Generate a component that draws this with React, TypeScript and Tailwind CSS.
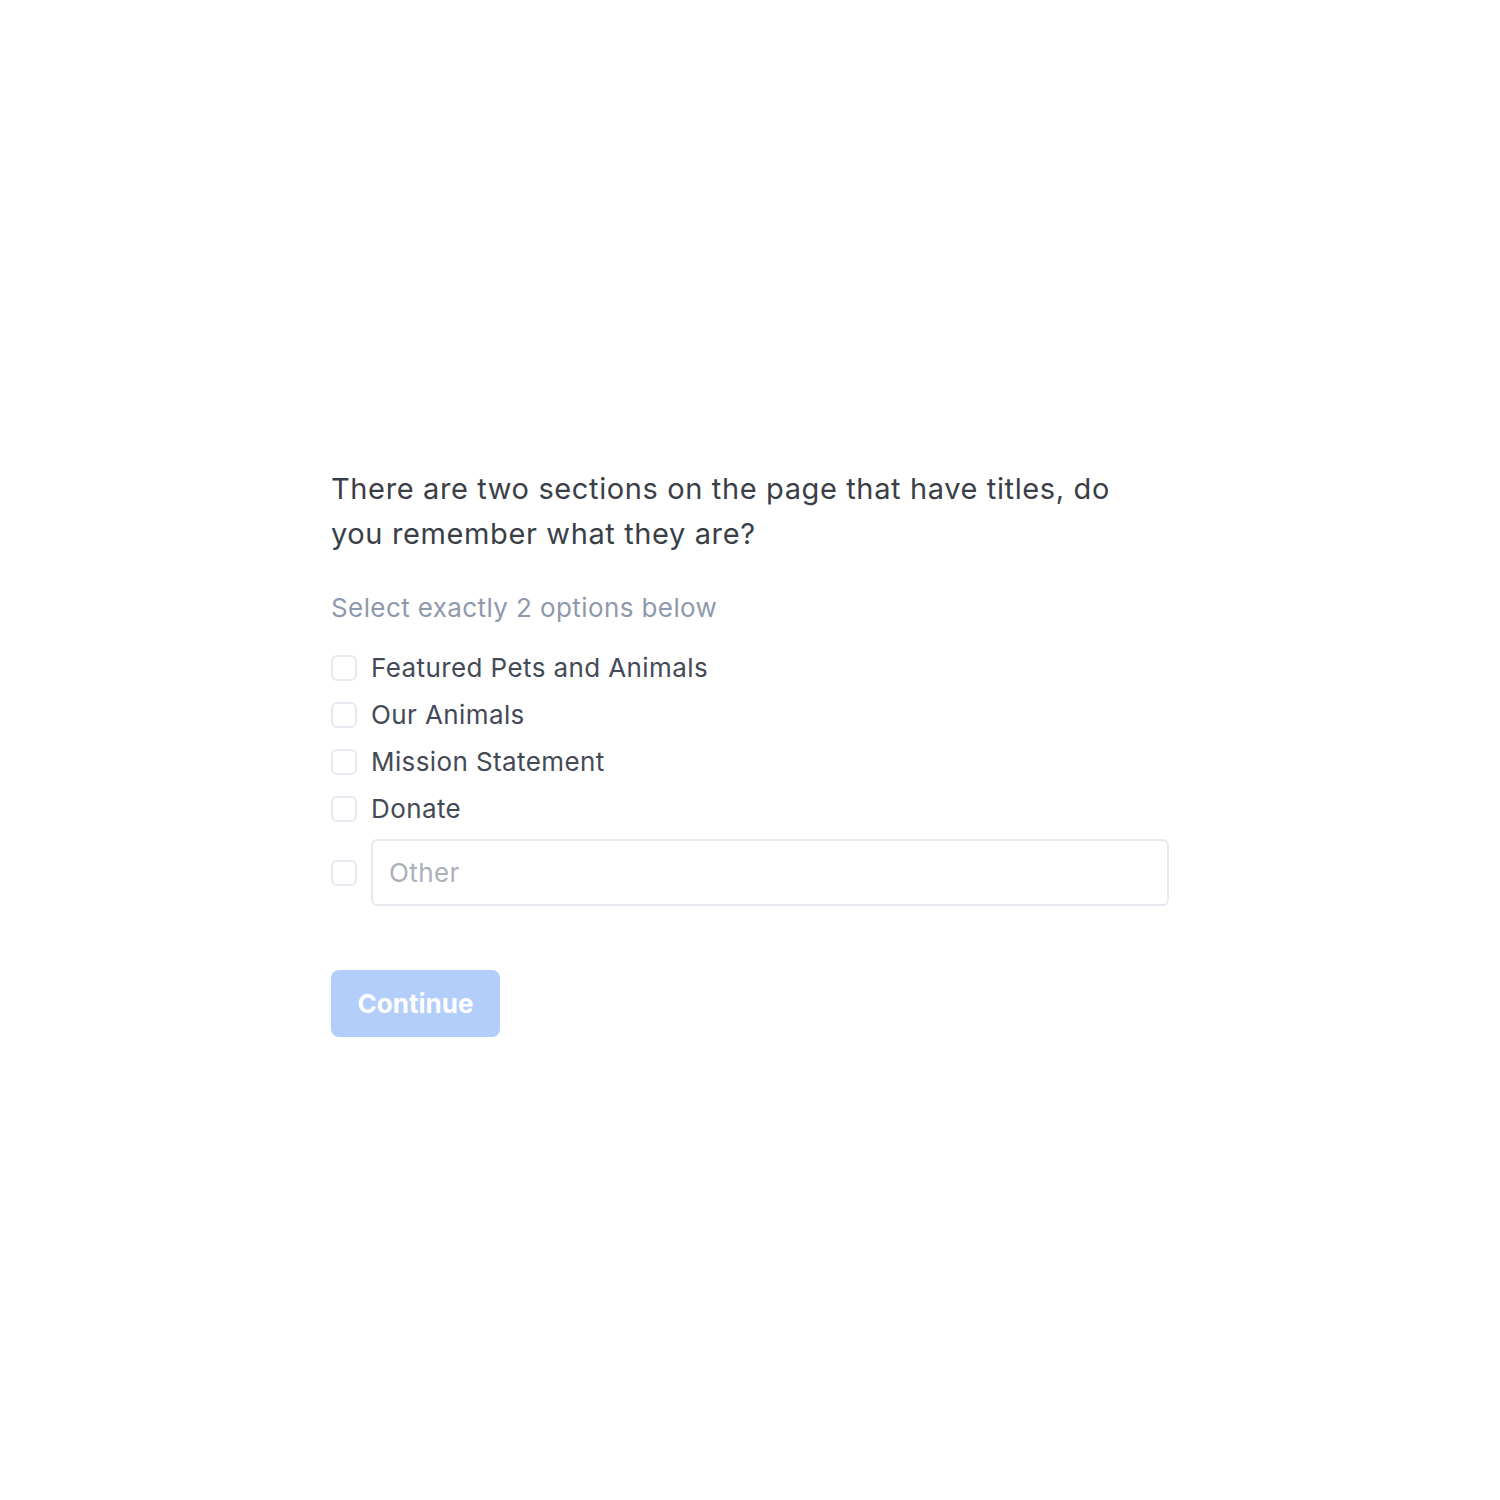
import React from "react";

const options = ["Featured Pets and Animals", "Our Animals", "Mission Statement", "Donate"];

function Box() {
  return <span className="block w-[26px] h-[26px] rounded-[6px] border-2 border-[#e6eaf0] bg-white shrink-0" />;
}

export default function App() {
  return (
    <div className="w-full h-[1500px] bg-white flex items-center justify-center" style={{ fontFamily: "Inter, 'Noto Sans', sans-serif" }}>
      <div className="w-[838px] flex flex-col pt-[3px]">
        <p className="text-[29px] leading-[45px] text-[#3a3f47] tracking-[0.62px] pr-[40px]">
          There are two sections on the page that have titles, do you remember what they are?
        </p>
        <p className="mt-[35px] text-[26px] leading-[34px] text-[#8e9aab] tracking-[0.4px]">Select exactly 2 options below</p>
        <div className="mt-[26px] flex flex-col gap-[13px]">
          {options.map((o) => (
            <label key={o} className="flex items-center gap-[14px] h-[34px]">
              <Box />
              <span className="text-[26px] leading-[34px] text-[#444a55] tracking-[0.4px]">{o}</span>
            </label>
          ))}
          <div className="flex items-center gap-[14px]">
            <Box />
            <input
              placeholder="Other"
              className="flex-1 h-[67px] rounded-[6px] border-2 border-[#e6eaf0] px-[16px] text-[26px] tracking-[0.4px] text-[#444a55] placeholder:text-[#a9b0ba] outline-none"
            />
          </div>
        </div>
        <div className="mt-[64px]">
          <button className="w-[169px] h-[67px] rounded-[8px] bg-[#b4cefb] text-white text-[26px] font-bold">Continue</button>
        </div>
      </div>
    </div>
  );
}
